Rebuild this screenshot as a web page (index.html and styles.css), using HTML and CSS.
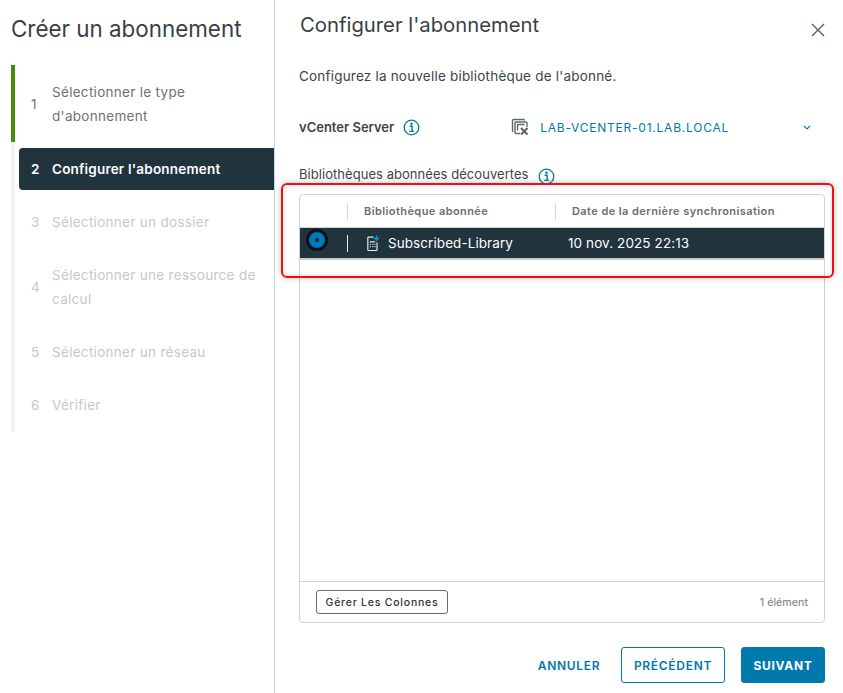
FILE: index.html
```html
<!DOCTYPE html>
<html lang="fr">
<head>
<meta charset="utf-8">
<title>Créer un abonnement</title>
<link rel="stylesheet" href="styles.css">
</head>
<body>
<div class="wizard">
  <aside class="side">
    <h2 class="side-title">Créer un abonnement</h2>
    <div class="steps-wrap">
      <span class="done-bar"></span>
      <ol class="steps">
        <li class="step done"><span class="num">1</span><span class="lbl">Sélectionner le type d'abonnement</span></li>
        <li class="step active"><span class="num">2</span><span class="lbl">Configurer l'abonnement</span></li>
        <li class="step"><span class="num">3</span><span class="lbl">Sélectionner un dossier</span></li>
        <li class="step"><span class="num">4</span><span class="lbl">Sélectionner une ressource de calcul</span></li>
        <li class="step"><span class="num">5</span><span class="lbl">Sélectionner un réseau</span></li>
        <li class="step"><span class="num">6</span><span class="lbl">Vérifier</span></li>
      </ol>
    </div>
  </aside>
  <main class="main">
    <header class="head">
      <h1 class="title">Configurer l'abonnement</h1>
      <svg class="close" width="14" height="14" viewBox="0 0 14 14"><path d="M1 1l12 12M13 1L1 13" stroke="#4a5f6b" stroke-width="1.4" fill="none"/></svg>
    </header>
    <p class="intro">Configurez la nouvelle bibliothèque de l'abonné.</p>
    <div class="vc-row">
      <span class="vc-label">vCenter Server</span>
      <svg class="info" width="17" height="17" viewBox="0 0 17 17"><circle cx="8.5" cy="8.5" r="7.3" fill="none" stroke="#0079ad" stroke-width="1.3"/><circle cx="8.5" cy="4.8" r="1.2" fill="#0079ad"/><path d="M6.6 7.3h2.5v4.8M6.2 12.4h4.8" fill="none" stroke="#0079ad" stroke-width="1.4"/></svg>
      <span class="vc-value">
        <svg class="vc-icon" width="18" height="18" viewBox="0 0 18 18"><g fill="none" stroke="#62696d" stroke-width="1.4"><path d="M2.5 13.5a1 1 0 0 1-1-1V2.5a1 1 0 0 1 1-1h10a1 1 0 0 1 1 1"/><path d="M9 15.5H5a1 1 0 0 1-1-1V5a1 1 0 0 1 1-1h10a1 1 0 0 1 1 1v4"/><path d="M6.5 12.5v-6h7"/></g><path d="M10 10l6.5 6.5M16.5 10L10 16.5" stroke="#565d62" stroke-width="1.8" fill="none"/></svg>
        <span class="vc-name">LAB-VCENTER-01.LAB.LOCAL</span>
      </span>
      <svg class="chev" width="8" height="5" viewBox="0 0 8 5"><path d="M.8.8L4 4l3.2-3.2" fill="none" stroke="#0079ad" stroke-width="1.1"/></svg>
    </div>
    <div class="lib-label">
      <span>Bibliothèques abonnées découvertes</span>
      <svg class="info low" width="17" height="17" viewBox="0 0 17 17"><circle cx="8.5" cy="8.5" r="7.3" fill="none" stroke="#0079ad" stroke-width="1.3"/><circle cx="8.5" cy="4.8" r="1.2" fill="#0079ad"/><path d="M6.6 7.3h2.5v4.8M6.2 12.4h4.8" fill="none" stroke="#0079ad" stroke-width="1.4"/></svg>
    </div>
    <section class="grid">
      <div class="g-head">
        <div class="c-radio"></div>
        <div class="c-name"><span class="sep"></span><span class="h-txt h-name">Bibliothèque abonnée</span></div>
        <div class="c-date"><span class="sep"></span><span class="h-txt h-date">Date de la dernière synchronisation</span></div>
      </div>
      <div class="g-row">
        <div class="c-radio"><span class="radio"></span></div>
        <div class="c-name"><span class="sep light"></span>
          <svg class="lib-icon" width="15" height="18" viewBox="0 0 14 16"><path d="M7 2.5H2.5a.8.8 0 0 0-.8.8v10.9a.8.8 0 0 0 .8.8h7a.8.8 0 0 0 .8-.8V7.5" fill="none" stroke="#e6ebed" stroke-width="1.1"/><path d="M3.5 7h5M3.5 9.2h1M6 9.2h1M8 9.2h.8M3.5 11.4h1M6 11.4h1M8 11.4h.8" stroke="#e6ebed" stroke-width="1.1" fill="none"/><path d="M9.8 .5v3M7.8 3.4h4l-2 2.4z" fill="#0095d3" stroke="#0095d3"/></svg>
          <span class="r-name">Subscribed-Library</span>
        </div>
        <div class="c-date"><span class="r-date">10 nov. 2025 22:13</span></div>
      </div>
      <div class="g-body"></div>
      <div class="g-foot">
        <button class="manage">Gérer Les Colonnes</button>
        <span class="count">1 élément</span>
      </div>
    </section>
    <footer class="actions">
      <button class="btn link">ANNULER</button>
      <button class="btn outline">PRÉCÉDENT</button>
      <button class="btn primary">SUIVANT</button>
    </footer>
    <div class="highlight"></div>
  </main>
</div>
</body>
</html>
```
FILE: styles.css
```css
* { box-sizing: border-box; }
html, body { margin: 0; height: 100%; }
body { background: #fff; font-family: "Inter", "Liberation Sans", sans-serif; color: #333; overflow: hidden; }
.wizard { display: flex; height: 693px; }
.side { width: 275px; flex: none; border-right: 1px solid #c9d3d9; padding-left: 11px; }
.side-title { margin: 0; height: 65px; padding-top: 14px; font-size: 22.4px; line-height: 30px; font-weight: 400; color: #3a3f42; white-space: nowrap; }
.steps-wrap { position: relative; }
.done-bar { position: absolute; left: 0; top: 0; width: 4px; height: 77px; background: #4a8a0a; }
.steps { list-style: none; margin: 0; padding: 6px 0; border-left: 4px solid #eef3f6; display: flex; flex-direction: column; gap: 11px; }
.step { margin-left: 4px; padding: 9px 12px 9px 12px; display: flex; align-items: center; gap: 12px; font-size: 13.5px; letter-spacing: .3px; line-height: 24px; color: #c4c9cc; border-radius: 4px 0 0 4px; }
.num { width: 9px; flex: none; }
.step.done { color: #6e7275; }
.step.active { background: #21333d; color: #fff; font-weight: 600; letter-spacing: .2px; }
.main { flex: 1; position: relative; padding: 0 18px 0 24px; min-width: 0; }
.head { display: flex; justify-content: space-between; height: 65px; }
.title { margin: 0; padding: 10px 0 0 1px; font-size: 20.3px; line-height: 30px; font-weight: 400; color: #3a3f42; }
.close { margin-top: 23px; }
.intro { margin: 0; font-size: 13.5px; letter-spacing: .2px; line-height: 22px; color: #3f4447; }
.vc-row { display: flex; align-items: center; height: 34px; margin-top: 23px; }
.vc-label { font-size: 13px; font-weight: 600; color: #3f4447; }
.info { flex: none; }
.vc-row .info { margin-left: 9px; }
.info.low { margin-top: 4px; }
.vc-value { display: flex; align-items: center; gap: 11px; margin-left: 91px; flex: 1; }
.vc-name { font-size: 12px; color: #0079ad; letter-spacing: .77px; }
.chev { margin-right: 14px; }
.lib-label { display: flex; align-items: center; gap: 9px; margin-top: 19px; height: 22px; font-size: 13px; letter-spacing: .05px; color: #3f4447; }
.grid { margin-top: 9px; height: 429px; border: 1px solid #c9d3d9; border-radius: 4px; display: flex; flex-direction: column; }
.g-head, .g-row { display: flex; flex: none; }
.g-head { height: 33px; align-items: center; border-bottom: 1px solid #c9d3d9; }
.c-radio { width: 47px; flex: none; position: relative; align-self: stretch; }
.c-name { width: 208px; flex: none; display: flex; align-items: center; }
.c-date { flex: 1; display: flex; align-items: center; }
.sep { width: 1px; height: 17px; background: #d3dade; flex: none; }
.sep.light { background: #e6eaec; }
.h-txt { font-size: 11px; font-weight: 600; color: #6a6e71; letter-spacing: .42px; white-space: nowrap; }
.h-name { margin-left: 16px; }
.h-date { margin-left: 16px; }
.g-row { height: 30px; background: #21333d; color: #fff; align-items: center; box-shadow: 0 2px 0 #c8c8c8; }
.radio { display: block; width: 22px; height: 22px; margin: 1px 0 0 6px; border-radius: 50%; background: #0079b8; border: 3px solid #0b1216; position: relative; }
.radio::after { content: ""; position: absolute; left: 6px; top: 6px; width: 4px; height: 4px; border-radius: 50%; background: #1b2c36; }
.lib-icon { margin-left: 18px; flex: none; }
.r-name { margin-left: 7px; font-size: 13.5px; letter-spacing: .07px; white-space: nowrap; }
.r-date { margin-left: 13px; font-size: 13.5px; letter-spacing: .1px; white-space: nowrap; }
.g-body { flex: 1; }
.g-foot { height: 41px; flex: none; border-top: 1px solid #c9d3d9; display: flex; align-items: center; justify-content: space-between; padding: 0 16px; }
.manage { height: 24px; width: 132px; padding: 0; background: #fff; border: 1px solid #5f6e76; border-radius: 3px; font: 500 10.5px "Inter", "Liberation Sans", sans-serif; letter-spacing: .78px; color: #333; }
.count { font-size: 10.8px; color: #7a7e81; }
.actions { display: flex; justify-content: flex-end; gap: 16px; margin-top: 24px; }
.btn { height: 36px; border-radius: 3px; font: 600 12px "Inter", "Liberation Sans", sans-serif; letter-spacing: .7px; padding: 0; }
.btn.link { width: 72px; background: none; border: 0; color: #0079ad; }
.btn.outline { width: 104px; background: #fff; border: 1px solid #0079ad; color: #0079ad; }
.btn.primary { width: 84px; background: #0079ad; border: 1px solid #0079ad; color: #fff; font-weight: 700; }
.highlight { position: absolute; left: 6px; top: 183px; width: 553px; height: 95px; border: 2px solid #f01010; border-radius: 6px; box-shadow: 0 0 6px rgba(0,0,0,.25), inset 0 0 6px rgba(0,0,0,.12); pointer-events: none; }
```
